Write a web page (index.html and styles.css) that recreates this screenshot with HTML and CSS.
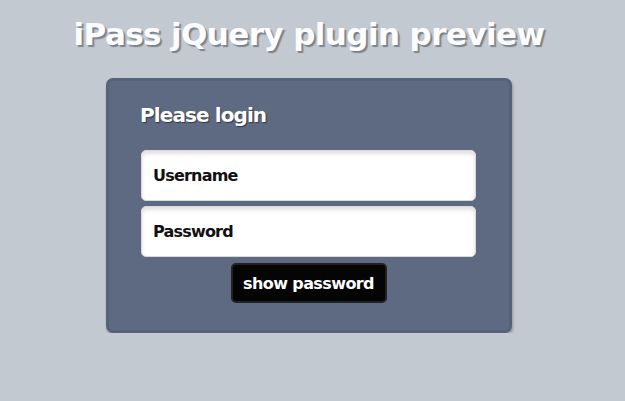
FILE: index.html
```html
<!DOCTYPE html>
<html lang="en">
<head>
    <meta charset="UTF-8">
    <title>iPass jQuery plugin preview</title>
    <link rel="stylesheet" href="styles.css">
</head>
<body>
    <div id="wrapper">
        <h1>iPass jQuery plugin preview</h1>
        <form id="login-box">
            <h2>Please login</h2>
            <input type="text" class="field" placeholder="Username">
            <input type="password" class="field" placeholder="Password">
            <button type="button" class="show-btn">show password</button>
        </form>
    </div>
</body>
</html>
```
FILE: styles.css
```css
body {
    margin: 0;
    padding: 0;
    background-color: #c3c9d1;
    font-family: "DejaVu Sans", Verdana, sans-serif;
}

#wrapper {
    width: 618px;
    display: flex;
    flex-direction: column;
    align-items: center;
}

h1 {
    margin: 16px 0 26px;
    font-size: 31px;
    line-height: 36px;
    letter-spacing: -0.6px;
    color: #fbfcfd;
    text-shadow: 2px 2px 1px #7d838c;
}

#login-box {
    width: 335px;
    padding: 23px 33px 27px 32px;
    background-color: #5d6a82;
    border: 3px solid #56627a;
    border-radius: 7px;
    box-shadow: 1px 2px 3px rgba(0, 0, 0, 0.25);
    display: flex;
    flex-direction: column;
    align-items: center;
}

h2 {
    align-self: flex-start;
    margin: 0 0 23px -1px;
    font-size: 20px;
    line-height: 23px;
    letter-spacing: -0.9px;
    color: #fff;
    text-shadow: 1px 1px 1px #2e3646;
}

.field {
    box-sizing: border-box;
    width: 335px;
    height: 51px;
    margin: 0 0 5px;
    padding: 0 11px;
    border: 1px solid #d9d9d9;
    border-radius: 5px;
    background-color: #fff;
    box-shadow: inset 0 3px 4px rgba(0, 0, 0, 0.12);
    font-family: "DejaVu Sans", Verdana, sans-serif;
    font-size: 16px;
    font-weight: bold;
    letter-spacing: -0.8px;
}

.field::placeholder {
    color: #111;
}

.show-btn {
    width: 156px;
    height: 40px;
    margin-top: 1px;
    background-color: #050505;
    border: 2px solid #222;
    border-radius: 5px;
    color: #fff;
    font-family: "DejaVu Sans", Verdana, sans-serif;
    font-size: 16px;
    font-weight: bold;
    letter-spacing: -0.6px;
    cursor: pointer;
}
```
